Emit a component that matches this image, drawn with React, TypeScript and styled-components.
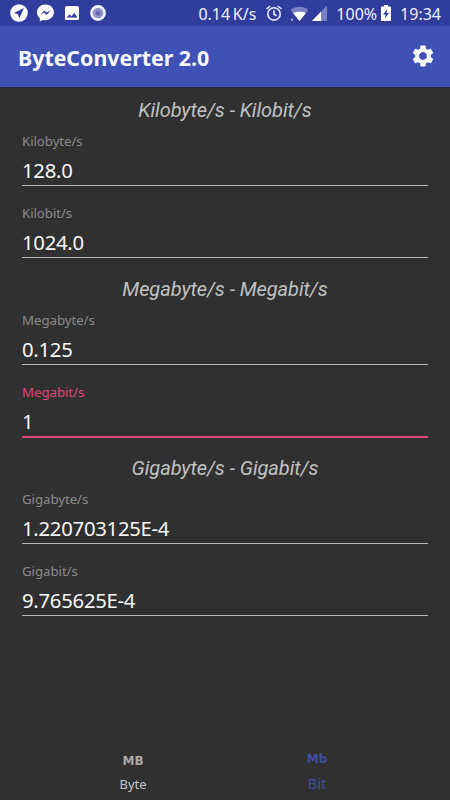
import React from "react";
import styled, { createGlobalStyle } from "styled-components";

const GlobalStyle = createGlobalStyle`
  * { box-sizing: border-box; }
  html, body { margin: 0; padding: 0; background: #303030; }
  body { font-family: "Noto Sans", "Open Sans", sans-serif; }
`;

const Screen = styled.div`
  width: 450px;
  height: 800px;
  display: flex;
  flex-direction: column;
  overflow: hidden;
  background: #303030;
`;

const StatusBar = styled.header`
  flex: none;
  height: 26px;
  display: flex;
  align-items: center;
  justify-content: space-between;
  padding: 0 9px 0 10px;
  background: #303d9c;
  color: #eef0fb;
  font-size: 16px;
  line-height: 26px;
  white-space: nowrap;
`;

const Notifications = styled.div`
  display: flex;
  gap: 8px;
`;

const StatusInfo = styled.div`
  display: flex;
  align-items: center;
`;

const StatusText = styled.span<{ $gap?: number; $tightWords?: boolean }>`
  margin-right: ${(p) => p.$gap ?? 0}px;
  padding-top: 1px;
  word-spacing: ${(p) => (p.$tightWords ? -1.5 : 0)}px;
`;

const StatusIcon = styled.svg<{ $gap?: number }>`
  display: block;
  flex: none;
  margin-right: ${(p) => p.$gap ?? 0}px;
`;

const AppBar = styled.div`
  flex: none;
  height: 62px;
  display: flex;
  align-items: center;
  justify-content: space-between;
  padding: 2px 14px 0 18px;
  background: #3f51b5;
  border-bottom: 1px solid #28263a;
`;

const Title = styled.h1`
  margin: 0;
  color: #f8f9ff;
  font-size: 21.4px;
  font-weight: 700;
  line-height: 30px;
  letter-spacing: -0.03px;
  white-space: nowrap;
`;

const SettingsButton = styled.button`
  display: flex;
  padding: 0;
  border: 0;
  background: none;
  margin-top: -4px;
`;

const Content = styled.main`
  flex: 1;
  min-height: 0;
  padding: 5px 22px 0;
`;

const Section = styled.section`
  height: 179px;
`;

const SectionTitle = styled.h2`
  margin: 0;
  height: 35px;
  color: #c1c1c1;
  font-family: Roboto, sans-serif;
  font-size: 20px;
  font-style: italic;
  font-weight: 400;
  line-height: 35px;
  letter-spacing: -0.08px;
  text-align: center;
  white-space: nowrap;
`;

const Field = styled.label`
  display: block;
  height: 72px;
  padding-top: 4px;
`;

const FieldLabel = styled.span<{ $active?: boolean }>`
  display: block;
  height: 18px;
  color: ${(p) => (p.$active ? "#e0457b" : "#8b8b8b")};
  font-size: 13.3px;
  line-height: 18px;
  letter-spacing: -0.08px;
`;

const FieldInput = styled.input<{ $active?: boolean }>`
  display: block;
  width: 406px;
  height: ${(p) => (p.$active ? 37 : 36)}px;
  margin: 0;
  padding: 4px 0 0;
  border: 0;
  border-bottom: ${(p) => (p.$active ? "2px solid #e0457b" : "1px solid #b8b8b8")};
  border-radius: 0;
  outline: 0;
  background: transparent;
  color: #f7f7f7;
  font-family: inherit;
  font-size: 20.3px;
  letter-spacing: -0.26px;
`;

const BottomNav = styled.nav`
  flex: none;
  height: 61px;
  display: flex;
  justify-content: center;
  border-top: 1px solid #2c2c2c;
`;

const NavItem = styled.div<{ $active?: boolean }>`
  width: 184px;
  display: flex;
  flex-direction: column;
  align-items: center;
  padding-top: ${(p) => (p.$active ? 11 : 13)}px;
  color: ${(p) => (p.$active ? "#3f4d9f" : "#c4c4c4")};
`;

const NavGlyph = styled.span<{ $active?: boolean }>`
  font-family: "DejaVu Sans", sans-serif;
  font-size: 12px;
  font-weight: 700;
  line-height: 16px;
  color: ${(p) => (p.$active ? "#3f4d9f" : "#aaa")};
`;

const NavLabel = styled.span<{ $active?: boolean }>`
  margin-top: ${(p) => (p.$active ? 6 : 5)}px;
  font-size: ${(p) => (p.$active ? 15 : 13)}px;
  line-height: 20px;
`;

type FieldData = { label: string; value: string; active?: boolean };

const sections: { title: string; fields: FieldData[] }[] = [
  {
    title: "Kilobyte/s - Kilobit/s",
    fields: [
      { label: "Kilobyte/s", value: "128.0" },
      { label: "Kilobit/s", value: "1024.0" },
    ],
  },
  {
    title: "Megabyte/s - Megabit/s",
    fields: [
      { label: "Megabyte/s", value: "0.125" },
      { label: "Megabit/s", value: "1", active: true },
    ],
  },
  {
    title: "Gigabyte/s - Gigabit/s",
    fields: [
      { label: "Gigabyte/s", value: "1.220703125E-4" },
      { label: "Gigabit/s", value: "9.765625E-4" },
    ],
  },
];

const TelegramIcon = () => (
  <StatusIcon width="18" height="18" viewBox="0 0 18 18">
    <circle cx="9" cy="9" r="8.8" fill="#fff" />
    <path d="M14 4 4 9l3.900 1.300 1.500 3.900z" fill="#303d9c" />
  </StatusIcon>
);

const MessengerIcon = () => (
  <StatusIcon width="18" height="18" viewBox="0 0 18 18">
    <path d="M9.400.4C4.600.4 1 3.800 1 8.300c0 2.600 1.100 4.600 2.800 6V17.600l3-1.700c.8.2 1.700.3 2.600.3 4.800 0 8.500-3.500 8.500-7.900S14.200.4 9.400.4z" fill="#fff" />
    <path d="m4.300 10.900 3.900-4.500 2.500 2.200 4-2.300-4.100 4.600-2.400-2.300z" fill="#303d9c" />
  </StatusIcon>
);

const PhotoIcon = () => (
  <StatusIcon width="18" height="18" viewBox="0 0 18 18">
    <rect x="3" y="2" width="14" height="14" rx="1.500" fill="#fff" />
    <path d="m4.800 13.500 2.700-3.300 2 2.200 2.800-3.700 3.300 4.800z" fill="#303d9c" />
  </StatusIcon>
);

const RecordIcon = () => (
  <StatusIcon width="18" height="18" viewBox="0 0 18 18">
    <circle cx="10" cy="9" r="7.900" fill="#f4f4fc" />
    <circle cx="10" cy="9" r="5.300" fill="#9297ce" />
    <circle cx="10" cy="9" r="2.600" fill="#686eb0" />
  </StatusIcon>
);

const AlarmIcon = () => (
  <StatusIcon $gap={7} width="18" height="18" viewBox="0 0 18 18" fill="none" stroke="#e8ebff" strokeWidth="1.600">
    <circle cx="9" cy="9.900" r="6.200" />
    <path d="M9 6.300v3.900l2.600 1.500M1.500 5l3.700-3M16.500 5l-3.700-3" />
  </StatusIcon>
);

const WifiIcon = () => (
  <StatusIcon $gap={3} width="19" height="18" viewBox="0 0 19 18">
    <path d="M.6 6C5.500 1.700 13.500 1.700 18.400 6L9.500 17z" fill="#7880c2" />
    <path d="M3.200 9.200C5.500 7.300 13.500 7.300 15.800 9.200L9.500 17z" fill="#fff" />
    <circle cx="2" cy="15.700" r=".9" fill="#dfe2fa" />
  </StatusIcon>
);

const SignalIcon = () => (
  <StatusIcon $gap={9} width="15" height="18" viewBox="0 0 15 18">
    <path d="M15 1.500V17H0z" fill="#7780c1" />
    <path d="M9 7.700V17H0z" fill="#fff" />
  </StatusIcon>
);

const BatteryIcon = () => (
  <StatusIcon $gap={9} width="10" height="18" viewBox="0 0 10 18">
    <path d="M3 1h4v1.500h2c.600 0 1 .4 1 1V16c0 .6-.4 1-1 1H1c-.6 0-1-.4-1-1V3.500c0-.6.4-1 1-1h2z" fill="#fff" />
    <path d="M6.200 5 2 10.600h2.500L3.900 14.500 8 8.900H5.500z" fill="#303d9c" />
  </StatusIcon>
);

const GearIcon = () => (
  <svg width="26" height="26" viewBox="0 0 24 24" fill="#fff">
    <path d="M19.140 12.940c.04-.3.06-.61.06-.94 0-.32-.02-.64-.07-.94l2.030-1.580c.18-.14.23-.41.12-.61l-1.920-3.320c-.12-.22-.37-.29-.59-.22l-2.390.96c-.5-.38-1.030-.7-1.620-.94l-.36-2.540c-.04-.24-.24-.41-.48-.41h-3.840c-.24 0-.43.17-.47.41l-.36 2.540c-.59.24-1.130.57-1.620.94l-2.390-.96c-.22-.08-.47 0-.59.22L2.740 8.870c-.12.21-.08.47.12.61l2.030 1.580c-.05.3-.09.63-.09.94s.02.64.07.94l-2.030 1.580c-.18.14-.23.41-.12.61l1.920 3.320c.12.22.37.29.59.22l2.390-.96c.5.38 1.030.7 1.620.94l.36 2.540c.05.24.24.41.48.41h3.840c.24 0 .44-.17.47-.41l.36-2.540c.59-.24 1.130-.56 1.620-.94l2.390.96c.22.08.47 0 .59-.22l1.920-3.320c.12-.22.07-.47-.12-.61l-2.010-1.580zM12 15.600c-1.980 0-3.600-1.620-3.600-3.600s1.620-3.600 3.600-3.600 3.600 1.620 3.600 3.600-1.620 3.600-3.600 3.600z" />
  </svg>
);

export default function App() {
  return (
    <>
      <GlobalStyle />
      <Screen>
        <StatusBar>
          <Notifications>
            <TelegramIcon />
            <MessengerIcon />
            <PhotoIcon />
            <RecordIcon />
          </Notifications>
          <StatusInfo>
            <StatusText $gap={9} $tightWords>0.14 K/s</StatusText>
            <AlarmIcon />
            <WifiIcon />
            <SignalIcon />
            <StatusText $gap={4}>100%</StatusText>
            <BatteryIcon />
            <StatusText>19:34</StatusText>
          </StatusInfo>
        </StatusBar>
        <AppBar>
          <Title>ByteConverter 2.0</Title>
          <SettingsButton aria-label="Settings">
            <GearIcon />
          </SettingsButton>
        </AppBar>
        <Content>
          {sections.map((section) => (
            <Section key={section.title}>
              <SectionTitle>{section.title}</SectionTitle>
              {section.fields.map((field) => (
                <Field key={field.label}>
                  <FieldLabel $active={field.active}>{field.label}</FieldLabel>
                  <FieldInput $active={field.active} defaultValue={field.value} />
                </Field>
              ))}
            </Section>
          ))}
        </Content>
        <BottomNav>
          <NavItem>
            <NavGlyph>MB</NavGlyph>
            <NavLabel>Byte</NavLabel>
          </NavItem>
          <NavItem $active>
            <NavGlyph $active>Mb</NavGlyph>
            <NavLabel $active>Bit</NavLabel>
          </NavItem>
        </BottomNav>
      </Screen>
    </>
  );
}
